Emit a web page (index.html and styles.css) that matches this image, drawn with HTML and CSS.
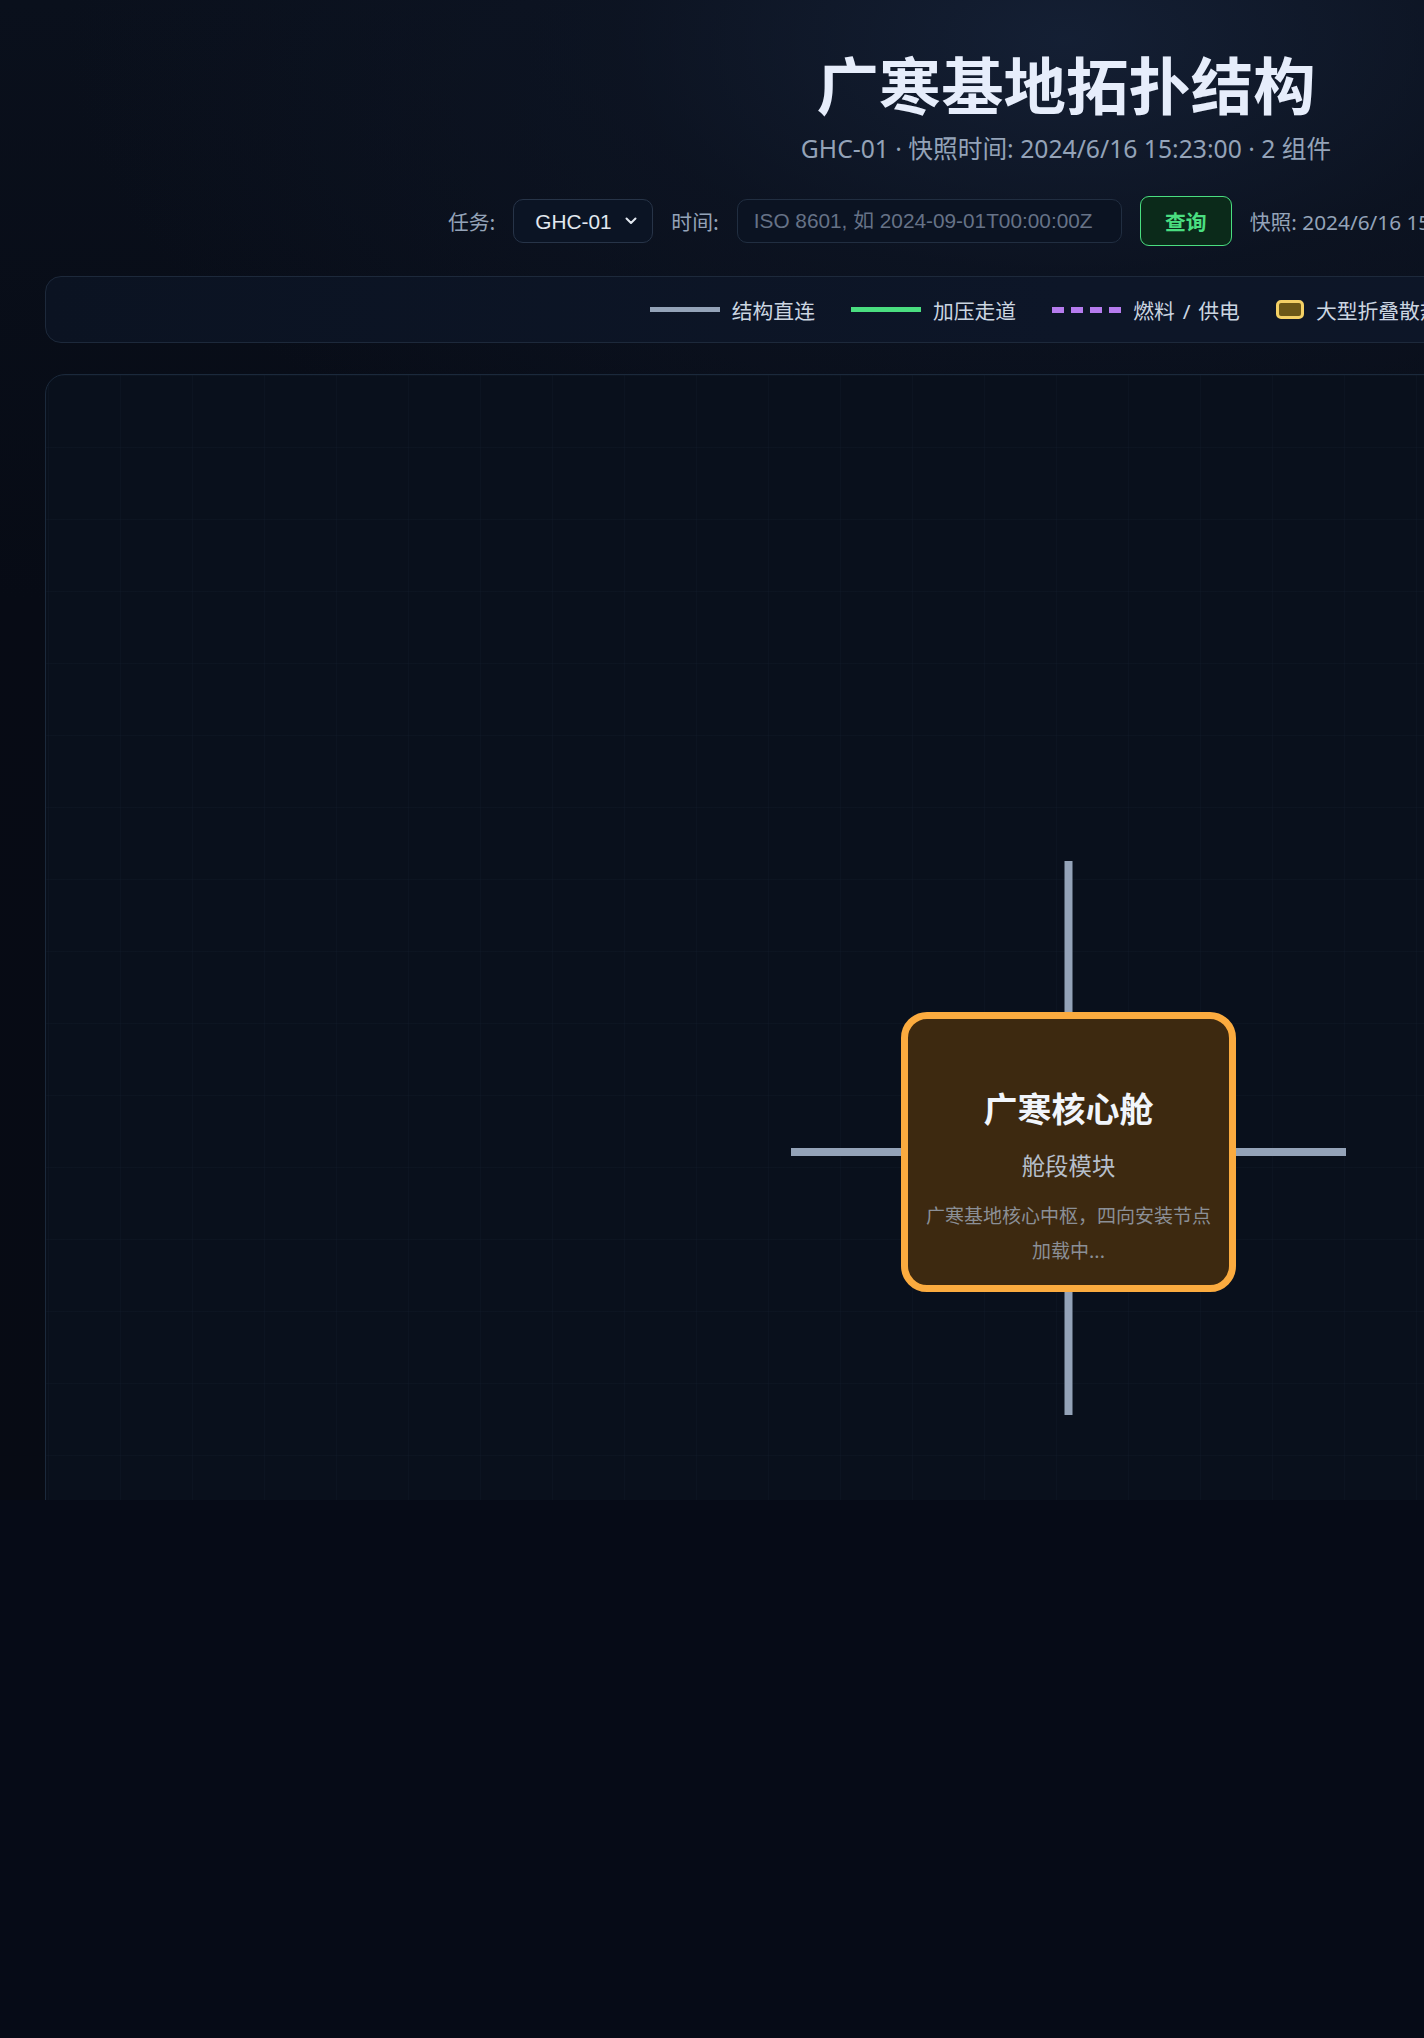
FILE: index.html
```html
<!DOCTYPE html>
<html lang="zh-CN">
<head>
<meta charset="utf-8">
<title>广寒基地拓扑结构</title>
<link rel="stylesheet" href="styles.css">
</head>
<body>
<div class="app">
  <header class="header">
    <h1 class="title">广寒基地拓扑结构</h1>
    <p class="subtitle">GHC-01 · 快照时间: 2024/6/16 15:23:00 · 2 组件</p>
  </header>

  <form class="controls">
    <label class="ctl-label" for="mission">任务:</label>
    <span class="select-wrap">
      <select id="mission" class="select">
        <option>GHC-01</option>
        <option>GHC-02</option>
      </select>
      <svg class="chevron" width="12" height="8" viewBox="0 0 12 8"><path d="M1.5 1.5 6 6l4.5-4.5" fill="none" stroke="#e2e8f0" stroke-width="2" stroke-linecap="round" stroke-linejoin="round"/></svg>
    </span>
    <label class="ctl-label" for="at">时间:</label>
    <input id="at" class="input" type="text" placeholder="ISO 8601, 如 2024-09-01T00:00:00Z">
    <button class="btn-query" type="button">查询</button>
    <span class="snapshot">快照: 2024/6/16 15:23:00</span>
    <span class="sync">● 实时同步 · 0.80s</span>
  </form>

  <section class="legend">
    <div class="legend-item"><span class="sw sw-struct"></span><span>结构直连</span></div>
    <div class="legend-item"><span class="sw sw-press"></span><span>加压走道</span></div>
    <div class="legend-item"><span class="sw sw-fuel"><i></i><i></i><i></i><i></i></span><span>燃料 / 供电</span></div>
    <div class="legend-item"><span class="sw sw-rad"></span><span>大型折叠散热阵列</span></div>
  </section>

  <section class="canvas">
    <svg class="links" width="2040" height="1200" viewBox="0 0 2040 1200">
      <line x1="1022.5" y1="486" x2="1022.5" y2="1040" stroke="#94a3b8" stroke-width="8"/>
      <line x1="745" y1="777" x2="1300" y2="777" stroke="#94a3b8" stroke-width="8"/>
    </svg>
    <div class="node node-core">
      <div class="node-title">广寒核心舱</div>
      <div class="node-type">舱段模块</div>
      <div class="node-desc">广寒基地核心中枢，四向安装节点<br>加载中...</div>
    </div>
  </section>
</div>
</body>
</html>
```

FILE: styles.css
```css
html, body {
  margin: 0;
  padding: 0;
  overflow: hidden;
  background: #060b17;
}

body {
  font-family: "Noto Sans", "Noto Sans CJK SC", sans-serif;
  color: #cbd5e1;
}

.app {
  box-sizing: border-box;
  width: 2132px;
  height: 1500px;
  overflow: hidden;
  padding: 46px 45px 0;
  background:
    radial-gradient(ellipse 1000px 520px at 1066px 40px, rgba(22, 34, 56, 0.85) 0%, rgba(14, 22, 38, 0.6) 45%, rgba(7, 11, 20, 0) 100%),
    linear-gradient(180deg, #0a101c 0%, #070b15 40%, #070b14 100%);
}

/* heading */
.header {
  text-align: center;
}

.title {
  margin: 0;
  font-family: "Noto Sans CJK SC", sans-serif;
  font-size: 62.4px;
  line-height: 75px;
  font-weight: 700;
  color: #e6edfb;
}

.subtitle {
  margin: 11px 0 0;
  font-size: 24.7px;
  line-height: 34px;
  color: #94a3b8;
}

/* query bar */
.controls {
  margin: 30px 0 0;
  height: 50px;
  display: flex;
  align-items: center;
  justify-content: center;
  gap: 18px;
  font-size: 20.8px;
}

.ctl-label {
  color: #94a3b8;
  font-family: "Noto Sans CJK SC", sans-serif;
}

.select-wrap {
  position: relative;
  display: inline-flex;
}

.select {
  appearance: none;
  -webkit-appearance: none;
  box-sizing: border-box;
  width: 140px;
  height: 44px;
  padding: 0 36px 0 21px;
  border: 1px solid #273448;
  border-radius: 10px;
  background: #0b1424;
  color: #e2e8f0;
  font-family: "Liberation Sans", Arial, sans-serif;
  font-size: 20.8px;
}

.chevron {
  position: absolute;
  right: 16px;
  top: 18px;
  pointer-events: none;
}

.input {
  box-sizing: border-box;
  width: 385px;
  height: 44px;
  padding: 0 16px;
  border: 1px solid #212e41;
  border-radius: 10px;
  background: #0b1322;
  color: #e2e8f0;
  font-family: "Liberation Sans", Arial, "Noto Sans CJK SC", sans-serif;
  font-size: 20.8px;
}

.input::placeholder {
  color: #667287;
}

.btn-query {
  box-sizing: border-box;
  width: 92px;
  height: 50px;
  border: 1.5px solid #4ade80;
  border-radius: 9px;
  background: #0b2a1a;
  color: #4ade80;
  font-family: "Noto Sans CJK SC", sans-serif;
  font-size: 20.8px;
  font-weight: 700;
}

.snapshot,
.sync {
  color: #94a3b8;
  white-space: nowrap;
}

/* legend */
.legend {
  box-sizing: border-box;
  margin-top: 30px;
  height: 67px;
  display: flex;
  align-items: center;
  justify-content: center;
  gap: 36px;
  border: 1px solid #1d293b;
  border-radius: 16px;
  background: linear-gradient(90deg, #0b1322 0%, #0d1628 50%, #0d1627 100%);
  font-family: "Noto Sans", "Noto Sans CJK SC", sans-serif;
  font-size: 20.8px;
  word-spacing: 2.5px;
  color: #cbd5e1;
}

.legend-item {
  display: flex;
  align-items: center;
  gap: 12px;
  white-space: nowrap;
}

.sw {
  display: block;
}

.sw-struct {
  width: 70px;
  height: 5px;
  background: #94a3b8;
}

.sw-press {
  width: 70px;
  height: 5px;
  background: #4ade80;
}

.sw-fuel {
  width: 69px;
  height: 6px;
  display: flex;
  gap: 7px;
}

.sw-fuel i {
  width: 12px;
  height: 6px;
  background: #b57bee;
}

.sw-rad {
  box-sizing: border-box;
  width: 28px;
  height: 19px;
  border: 3px solid #f3d065;
  border-radius: 5px;
  background: #6b5717;
}

/* topology canvas */
.canvas {
  position: relative;
  margin-top: 31px;
  height: 1600px;
  border: 1px solid #1b293b;
  border-radius: 20px;
  background-color: #09101c;
  background-image:
    linear-gradient(90deg, rgba(30, 44, 64, 0.14) 1px, transparent 1px),
    linear-gradient(180deg, rgba(30, 44, 64, 0.14) 1px, transparent 1px);
  background-size: 72px 72px;
  background-position: 2px 0;
}

.links {
  position: absolute;
  left: 0;
  top: 0;
}

.node {
  position: absolute;
  box-sizing: border-box;
  display: flex;
  flex-direction: column;
  align-items: center;
  text-align: center;
}

.node-core {
  left: 855px;
  top: 637px;
  width: 335px;
  height: 280px;
  padding-top: 67px;
  border: 7px solid #fbab3f;
  border-radius: 26px;
  background: #3d2910;
}

.node-title {
  font-family: "Noto Sans CJK SC", sans-serif;
  font-size: 34px;
  line-height: 44px;
  font-weight: 700;
  color: #f1f5fb;
}

.node-type {
  margin-top: 19px;
  font-family: "Noto Sans CJK SC", sans-serif;
  font-size: 23.4px;
  line-height: 32px;
  color: #b6bfcb;
}

.node-desc {
  margin-top: 16px;
  font-family: "Noto Sans CJK SC", sans-serif;
  font-size: 19px;
  line-height: 35px;
  color: #8b8f96;
}
```
